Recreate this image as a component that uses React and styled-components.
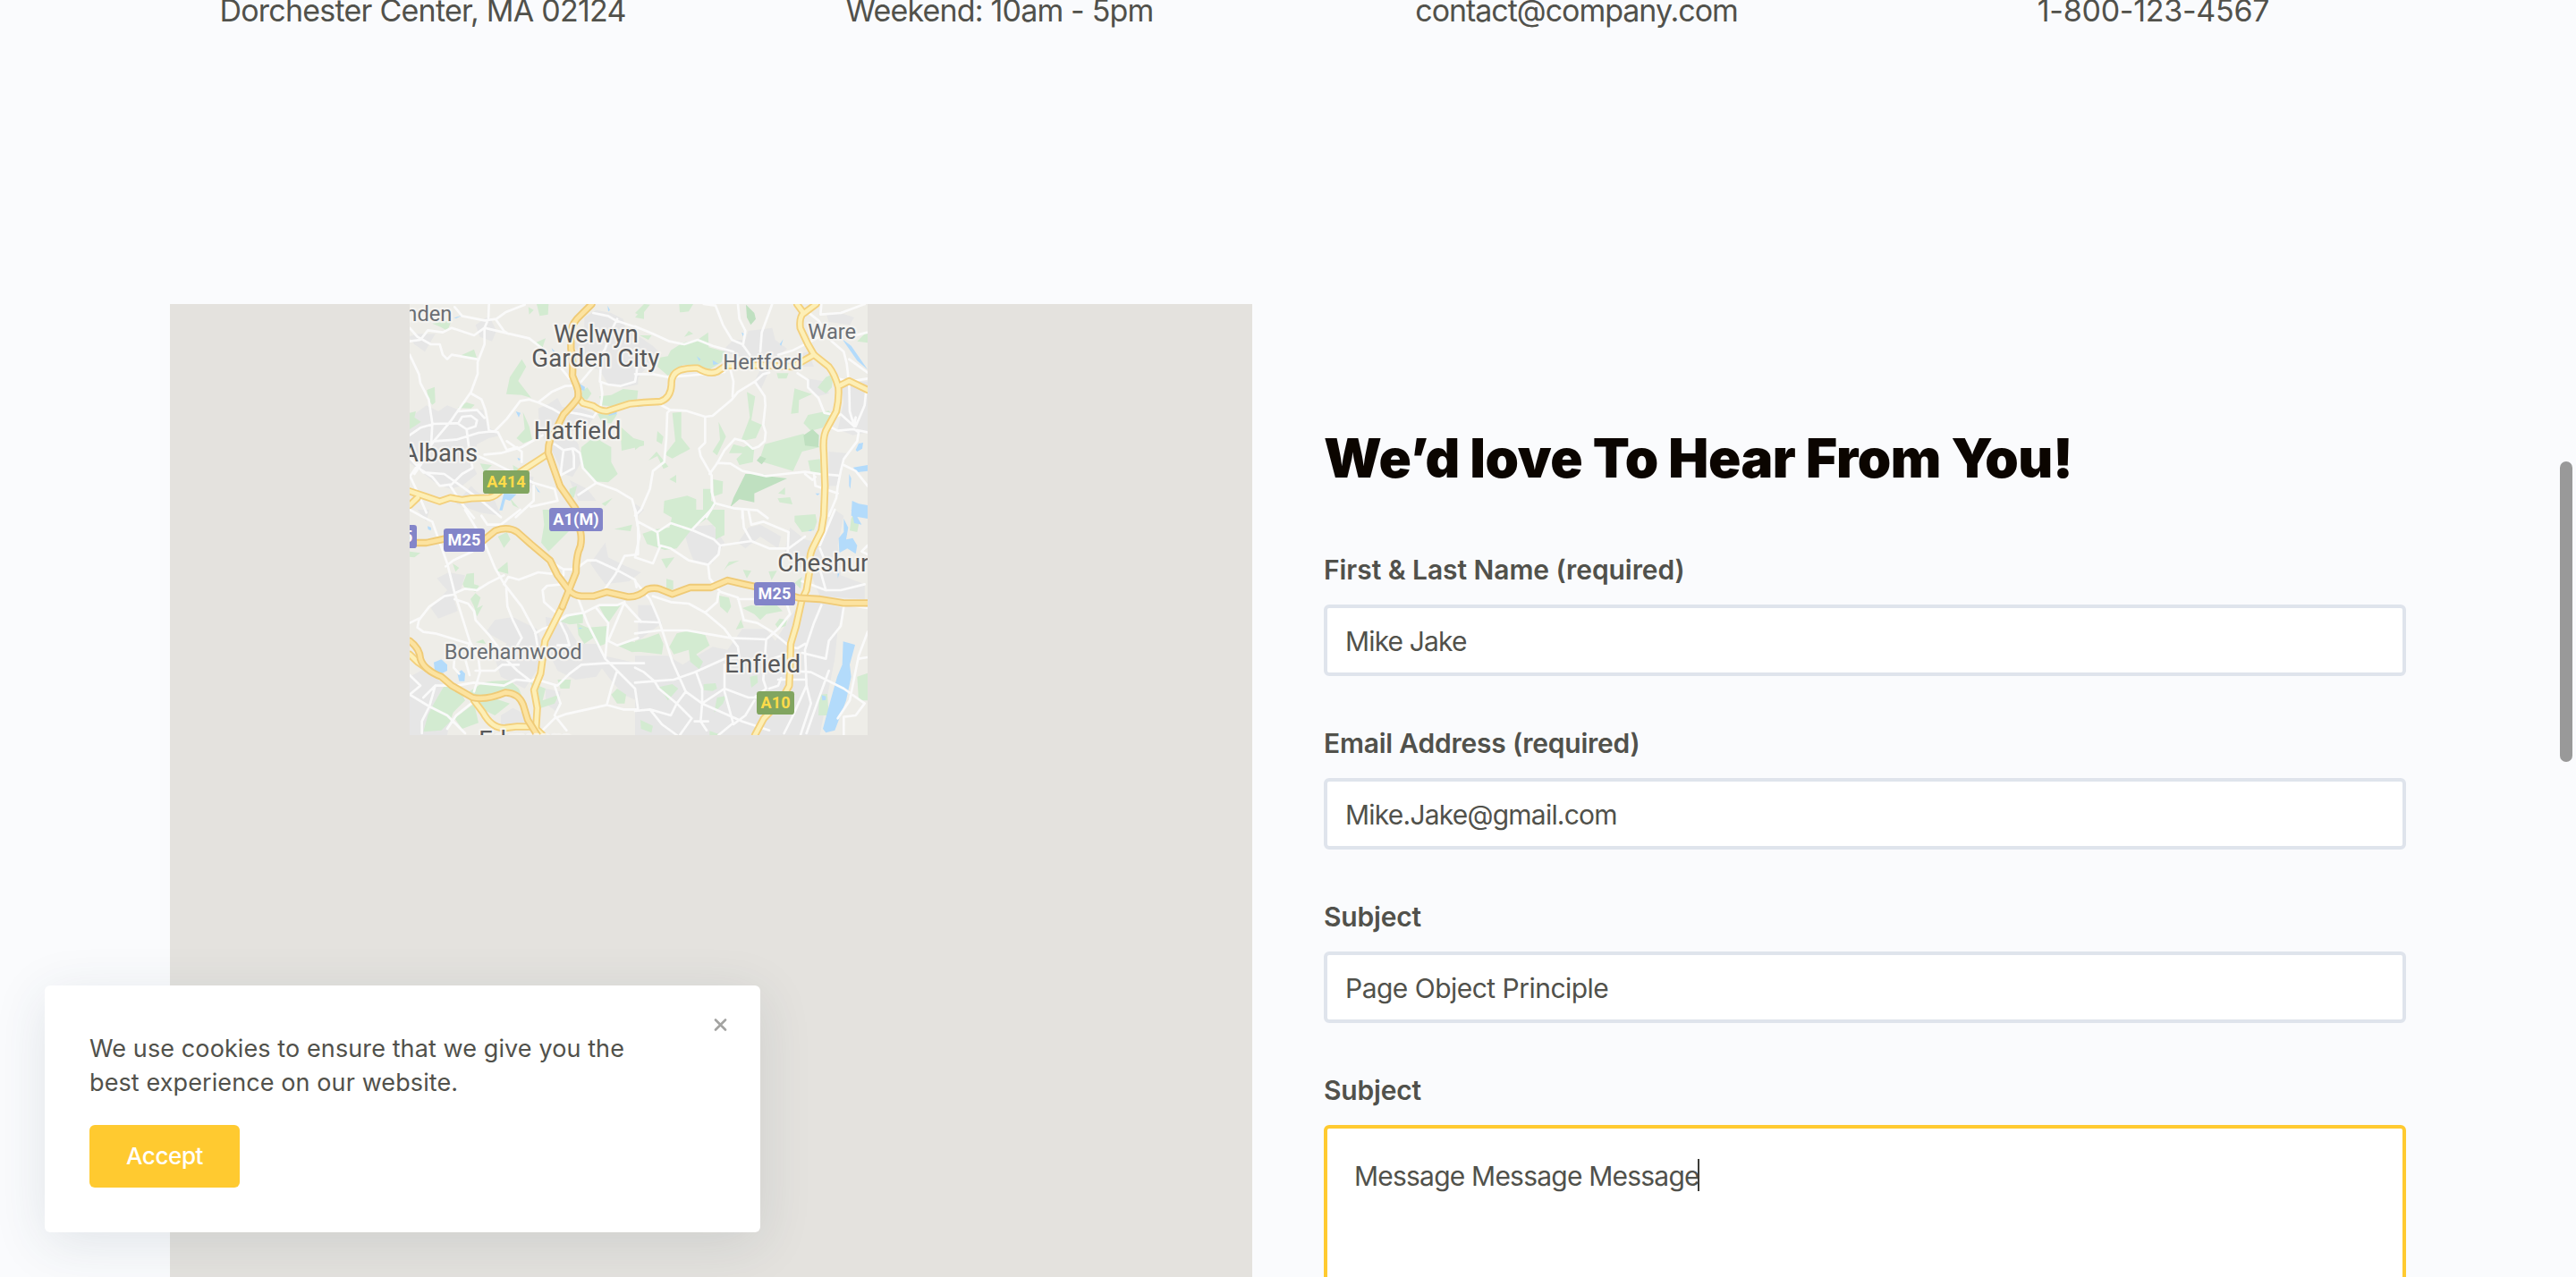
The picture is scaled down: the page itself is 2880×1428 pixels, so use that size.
import React from "react";
import styled, { createGlobalStyle, css } from "styled-components";

const GlobalStyle = createGlobalStyle`
  *, *::before, *::after { box-sizing: border-box; }
  html, body { margin: 0; height: 100%; overflow: hidden; background: #fafbfd; }
  body { font-family: Inter, "Liberation Sans", sans-serif; color: #51514b; }
`;

const Page = styled.div`
  position: relative;
  width: 100%;
  height: 100vh;
  overflow: hidden;
  background: #fafbfd;
`;

const ContactStrip = styled.section`
  display: grid;
  grid-template-columns: repeat(4, 645px);
  justify-content: center;
  height: 340px;
`;

const ContactLine = styled.p`
  margin: -12px 0 0;
  font-size: 34px;
  line-height: 48px;
  text-align: center;
  letter-spacing: ${(p) => p.$track || 0}px;
`;

const Columns = styled.main`
  display: grid;
  grid-template-columns: 1210px 1210px;
  column-gap: 80px;
  padding-left: 190px;
`;

const MapPanel = styled.div`
  height: 1160px;
  padding-left: 268px;
  background: #e4e2de;
`;

const MapTile = styled.svg`
  display: block;
  width: 512px;
  height: 482px;
`;

const Form = styled.form`
  padding-top: 134px;
`;

const Title = styled.h2`
  margin: 0 0 71px;
  font-size: 60px;
  line-height: 76px;
  font-weight: 900;
  letter-spacing: -0.42px;
  color: #0b0500;
  white-space: nowrap;
`;

const Field = styled.div`
  margin-bottom: 59px;
`;

const Caption = styled.span`
  display: block;
  height: 41px;
  margin-bottom: 14px;
  font-size: 30px;
  line-height: 32px;
  font-weight: 600;
  letter-spacing: ${(p) => p.$track || 0}px;
`;

const controlStyle = css`
  border: 4px solid ${(p) => (p.$active ? "#ffca30" : "#dfe4ec")};
  border-radius: 6px;
  background: #fff;
  font-size: 30px;
  letter-spacing: ${(p) => p.$track || 0}px;
`;

const Control = styled.div`
  ${controlStyle}
  display: flex;
  align-items: center;
  height: 80px;
  padding: 1px 20px 0;
`;

const MessageBox = styled.div`
  ${controlStyle}
  display: flex;
  align-items: flex-start;
  height: 300px;
  padding: 35px 30px;
  line-height: 36px;
`;

const Caret = styled.i`
  width: 2px;
  height: 36px;
  margin: -1px 0 0 -2px;
  background: #3c3c38;
`;

const CookieCard = styled.aside`
  position: absolute;
  left: 50px;
  bottom: 50px;
  width: 800px;
  height: 276px;
  padding: 52px 50px 50px;
  border-radius: 6px;
  background: #fff;
  box-shadow: 0 12px 60px rgba(44, 62, 80, 0.12);
`;

const CookieText = styled.p`
  width: 620px;
  margin: 0 0 28px;
  font-size: 27px;
  line-height: 38px;
  white-space: pre-line;
  letter-spacing: 0.1px;
`;

const AcceptButton = styled.button`
  width: 168px;
  height: 70px;
  padding: 0;
  border: 0;
  border-radius: 6px;
  background: #ffca30;
  color: #fff;
  font: 500 26px/70px Inter, sans-serif;
  letter-spacing: -0.4px;
`;

const CloseIcon = styled.svg`
  position: absolute;
  top: 37px;
  right: 37px;
  width: 15px;
  height: 14px;
`;

const ScrollThumb = styled.div`
  position: absolute;
  top: 516px;
  right: 4px;
  width: 14px;
  height: 336px;
  border-radius: 7px;
  background: #999;
`;

/* Map artwork: each group is [x offset, y offset, path data]. */
const urban = [
  [0, 0, "M0 460L40 400L80 370L120 390L150 370L200 390L270 385L285 440L330 470L290 480L250 500L230 560L250 600L200 640L160 650L110 630L60 590L20 560ZM20 140L50 130L110 130L75 190L40 165ZM245 100L290 70L315 120L300 155L260 140ZM455 380L490 365L520 345L535 375L570 380L600 380L650 400L620 440L560 460L590 500L600 560L570 610L540 600L500 520L460 460ZM610 75L650 50L700 60L740 80L750 120L790 130L790 300L740 310L690 300L660 250L620 240L600 190L560 170L610 120ZM560 620L620 650L650 690L590 690ZM250 660L310 690L330 740L260 730L180 700L230 640ZM380 600L440 610L430 650L410 640Z"],
  [780, 0, "M0 130L60 170L90 200L40 240L0 290ZM290 190L330 150L370 150L380 120L460 110L470 150L510 180L470 210L420 320L400 290L420 250L370 210ZM640 60L690 60L735 75L720 100L650 90ZM540 200L580 190L600 240L560 240ZM580 280L640 290L650 330L610 340L580 310ZM690 300L720 290L780 290L780 460L730 470L680 450L700 360ZM650 525L710 530L680 640L650 640ZM0 700L30 720L0 750Z"],
  [0, 720, "M115 230L155 210L210 220L195 270L170 290L185 340L120 365L95 330L150 270ZM370 360L450 400L470 450L450 540L410 600L330 560L310 500L350 450L280 410L310 370ZM480 360L540 370L590 450L650 450L690 500L650 560L580 570L520 540L490 480ZM630 180L680 110L690 160L750 190L800 210L760 240L680 250L650 210ZM330 690L370 665L400 680L420 740L330 740ZM24 560L80 530L140 590L100 660L160 700L150 756L24 756ZM50 0L90 0L80 40ZM630 480L810 520L810 650L740 620L690 560ZM480 600L530 610L520 680L480 650Z"],
  [780, 720, "M0 490L110 490L160 520L190 500L260 460L310 470L360 400L440 400L470 440L560 300L620 310L700 330L680 400L670 500L640 650L620 756L0 756ZM160 60L260 50L300 110L260 180L200 180L180 130ZM520 60L570 100L620 110L670 0L700 20L680 120L690 220L770 250L770 300L620 290L590 220L500 150L510 100ZM380 60L420 50L490 90L480 130L420 90L370 130L345 110ZM10 320L60 320L90 380L10 440Z"],
];
const green = [
  [0, 0, "M400 215L415 240L388 288L432 345L400 335L348 332L360 275ZM190 205L240 182L250 213ZM82 318L108 308L110 360L100 368L85 350ZM185 378L215 360L242 368L230 380ZM24 395L45 390L40 410L62 425L40 440L24 450ZM404 392L425 440L435 485L405 497L382 480L410 450ZM602 320L620 310L634 330L620 350L600 348ZM660 340L700 335L740 315L790 320L785 365L720 375L670 370ZM655 400L690 385L720 400L700 430L670 430ZM730 440L775 480L810 490L810 505L735 522ZM600 510L650 470L665 490L700 510L700 560L722 600L690 628L640 625L605 585L595 550ZM422 40L440 50L425 65ZM450 30L490 30L488 65L460 70ZM100 95L165 85L150 120L130 108ZM446 160L480 145L470 175ZM780 75L810 40L810 80ZM260 565L300 570L275 595ZM370 570L404 590L375 600ZM560 650L585 640L575 680L560 675ZM668 700L705 680L680 708ZM360 680L390 715L370 705Z"],
  [780, 0, "M0 60L30 30L50 32L20 70ZM148 30L195 30L180 55L150 58ZM80 210L110 205L120 185L160 160L210 150L245 125L247 175L300 190L290 225L250 250L200 235L160 235L110 270L75 240ZM15 135L55 135L45 150ZM165 140L180 120L195 130ZM375 325L403 340L390 420L425 435L405 480L355 490L385 410ZM535 313L593 332L550 352L548 395L523 398ZM612 310L640 275L665 265L660 310L640 330ZM565 430L580 402L650 388L660 400L630 445L590 455ZM125 395L155 392L155 478L185 516L125 548L100 535L135 490ZM75 456L95 475L90 500L72 490ZM45 555L72 525L112 575L95 583L75 540ZM280 425L305 475L275 538L260 525L285 485ZM435 500L565 465L620 510L560 525L530 590L430 560L420 545ZM315 530L330 500L365 510L385 500L400 515L395 560L350 570L340 550L360 530ZM580 555L620 550L625 600L590 600ZM475 262L515 262L508 280L480 280ZM115 618L138 603V630ZM262 618L295 625L293 665L265 675ZM228 650L255 650L255 690L275 700L240 740L228 735ZM98 690L175 673L205 685L205 740L130 750L95 730ZM480 665L503 645L503 670ZM478 682L520 678L528 702L485 695ZM745 155L780 120V160ZM0 505L28 498L0 520Z"],
  [0, 720, "M470 0L570 0L570 60L540 90L490 140L465 110L475 50ZM320 90L350 75L362 100L340 128ZM24 140L60 145L40 160L24 158ZM168 180L190 195L178 208ZM315 205L352 175L355 215ZM202 250L215 215L240 212L240 250L257 255L245 275L210 265ZM228 300L245 280L262 295L250 330L270 320L250 358L240 325ZM530 375L570 350L605 350L605 380L560 385ZM585 380L620 395L690 390L680 450L655 460L640 430L610 450L590 420ZM245 445L270 435L280 450ZM660 325L735 315L690 380ZM720 455L760 440L810 450V475L770 478ZM710 65L770 50L765 72ZM700 620L720 600L750 620L745 650L720 650ZM430 580L480 600L470 640L525 620L510 650L450 670L440 620ZM520 570L565 570L560 600L530 600ZM270 580L300 575L360 572L390 600L400 625L340 615L300 630L360 650L310 690L260 665L245 630L225 610ZM105 650L140 590L190 600L210 640L170 680L160 710L130 740L70 745L85 690ZM175 700L240 650L255 715L200 735Z"],
  [780, 720, "M25 80L70 65L115 60L130 0L300 0L300 85L270 100L270 60L240 30L190 65L140 130L100 135L40 115ZM88 165L132 160L105 197ZM105 232L128 238L128 268H105ZM297 205L315 175L350 170L310 190ZM362 202L390 205L375 230ZM448 207L476 205L458 236ZM535 20L605 15L610 40L600 70L560 75L535 40ZM740 0L750 50L745 75L720 70L725 30ZM282 288L315 295L322 325L310 347L285 325ZM360 330L390 320L420 325L470 315L495 340L440 350L420 370L400 350ZM355 368L365 395L338 402ZM470 385L485 365L510 370L505 390L480 398ZM0 440L40 430L80 415L95 450L90 485L0 475ZM115 460L140 415L180 405L235 420L250 455L205 485L228 510L215 535L185 510L180 470L130 485ZM230 585L270 582L275 600L260 608L230 605ZM80 595L125 585L145 600L110 640ZM275 630L305 625L295 650L265 680ZM385 560L410 555L412 580L390 597ZM745 560L780 548V640L750 640ZM618 620L645 618L650 690L615 690ZM18 705L60 725L55 748L20 735ZM250 742L290 756H250ZM535 245L560 225L555 265Z"],
];
const darkGreen = [
  [780, 0, "M372 32L400 60L405 80L388 100L375 75ZM565 470L595 450L617 470L615 510L570 505ZM408 555L420 540L440 548L425 568ZM330 680L345 650L370 600L430 600L455 608L510 615L400 665L400 695L350 685L320 710Z"],
];
const water = [
  [0, 0, "M590 295L612 308L610 320L595 318ZM380 390L396 395L390 410ZM385 545L396 550L390 556ZM340 665L382 668L360 690L345 685L335 722L325 722ZM443 638L462 662L455 660ZM500 178L512 190L505 192ZM172 76L200 68L180 78ZM688 35L696 50L690 55ZM690 395L720 388L718 398L692 405Z"],
  [780, 0, "M207 205L220 215L215 222ZM260 218L280 230L262 234ZM485 165L497 148L490 170ZM695 148L725 170L780 250L745 220ZM740 520L750 498L765 495L762 515L745 525ZM732 578L780 570V590L740 595ZM728 690L750 700L780 705V750L725 740ZM718 600L725 615L722 650L718 640ZM605 665H620L612 672ZM0 370L30 372L10 376ZM357 125L367 130L362 138Z"],
  [0, 720, "M105 512L130 502L150 520L150 540L125 553L108 540ZM184 548L198 538L210 550L208 575H190ZM84 55L96 60L95 70L86 66ZM590 396H605L595 400Z"],
  [780, 720, "M725 0L770 0L740 15L760 50L735 45ZM700 30L715 60L708 100L730 95L745 120L740 148L712 130L685 145L683 95L700 75ZM698 442L738 453L720 520L725 560L708 640L670 740L640 748L630 735L650 660L678 560L695 520ZM626 622L640 626V638L628 640ZM580 70L595 65L590 72ZM678 200L685 215L680 230Z"],
];
const roads = [
  [0, 0, "M290 30L288 80L275 110L275 165L252 225L252 265L230 325L160 425L105 490L24 610M175 40L200 70L275 85L315 80L345 58L410 32M24 155L60 150L85 118L135 125L165 110L240 135L275 110L360 130L425 145L470 180M24 110L50 140L95 165L125 165L135 200L150 215L165 200L250 215M24 200L55 265L60 295L88 350L100 430L95 520L40 600M230 330L265 350L278 385L285 420L290 455L320 460L350 520L385 510M24 470L60 445L105 432L185 430L215 450L245 440L250 420L230 405L200 408L190 425M185 390L250 385L275 412M105 490L180 485L255 462L310 456L350 415L395 355L425 350L455 360L500 325L545 305L590 303M275 535L330 530L400 510L470 470M350 490L400 525L400 560M455 360L500 380L535 400M215 450L225 530L235 580L200 600L165 635L125 640L100 610L60 585M24 545L70 595L140 600L210 650L265 690L330 745M230 530L300 560L370 595L440 630L510 650L520 690L430 710M315 85L340 120L355 130M540 390L600 400L640 410L665 370L668 350M665 240L662 290L690 300L730 305L780 290L785 260L790 210M665 295L670 330L668 350M520 230L560 280M600 290L650 230L680 180L700 120L720 80M640 60L690 70L715 85L790 110M510 500L540 520L535 560L530 605L575 580L575 540L570 515L540 520M575 515L595 530L605 580L650 630L720 655L770 685L785 740M650 630L590 670M160 640L200 700L240 748M24 605L50 660L80 730M380 745L440 690L440 640"],
  [780, 0, "M230 30L270 35L295 100L325 150L360 165L385 200M345 30L350 80L370 120L362 170M460 30L425 125L420 190M0 105L60 130L115 155L165 165L210 150L260 170L330 190M0 265L60 265L110 275L180 270L300 258M320 250L330 290L327 340M70 360L118 385L170 388L235 408L260 405L325 350L345 325L402 290L430 265L450 260M402 290L435 340L437 370L430 435L438 460L435 490L415 508L395 515L365 490L335 482L300 520L275 565L250 600M235 408V495L215 515L220 540L257 605L257 660L268 698L240 745M118 385L108 395L105 480L98 560L60 590L50 650L20 720L0 740M275 563L320 565L360 590L440 607L500 600L570 593L620 600L680 605M268 698L330 715L410 722L445 748M480 200L530 185L590 155L625 135M570 50L615 85L660 155L700 190L710 230L718 300L720 390L735 440L690 400L680 405M625 30L622 65L690 60L770 30M650 440L680 455L730 450L780 460M735 440L740 410L735 425M735 450L750 460L745 490L700 550L690 590L680 640L675 680L650 740M700 570L740 590L780 640M600 600L605 640L680 665M570 600L595 620L605 610M545 262L580 285L580 310L615 345L635 395L660 400M718 215L780 260M680 280L720 290L780 280M775 320L770 370L740 440M780 125L720 140M360 720V748"],
  [0, 720, "M24 0L70 25L100 40L150 180L175 280L225 440L255 500L260 545L240 610M210 0L275 110L310 195L342 250L400 325L445 410L455 470M265 20L285 50L330 50L395 0M330 50L300 80M145 190L170 170L235 140M175 280L210 265L250 270L290 245L340 220M170 285L140 290L90 325L55 370L50 395L70 410L110 415L225 450M24 380L55 365M175 300L220 315L240 340L245 370L290 420L320 460L345 500L385 540L430 575M340 250L355 225L390 235L430 220L455 210L500 215M348 265L352 325L370 370L400 430L385 455M445 415L470 400L500 390L550 355L610 345L660 320L720 320L745 310M535 250L485 255L470 270L475 310L520 350M530 380L550 420L560 455L520 455M450 570L520 590L560 550L600 520L680 515L810 515M590 300L620 380L680 500L720 540L780 600L790 670L740 670L685 655L550 685L510 700L470 740M680 500L685 440L690 380L650 330M680 265L715 215L745 155L790 150L790 60L780 0M540 200L580 200L620 170L650 170L715 200L780 235L785 260M745 310L720 370L690 440L720 455L790 430M745 315L800 375M24 555L60 590L24 620L90 660L150 690L210 750M240 580L180 590L110 590L70 630M240 580L340 590L380 570L430 575L450 565M245 540L310 540L335 520L390 520M230 650L180 690L150 735M110 590L90 660L65 710L65 750M510 590L530 650L510 690L550 740M720 540L700 600L685 655M175 480L172 530L190 550M225 450L210 500L225 555M490 170L540 200L540 220"],
  [780, 720, "M0 0L15 90L0 160L60 180L85 120L120 130L180 170L245 185L280 150L285 120L265 100L195 70L120 45L75 75L80 120M10 40L75 75M190 68L255 0M360 0L365 60L390 105L450 130L515 130L570 90M380 0L390 50L430 40L515 75L512 140M285 120L390 105M0 240L50 300L80 370L125 510L170 610L225 650L360 710L450 740M60 290L120 310L180 315L235 345L300 400L345 460L350 500M245 185L250 230L285 275L345 295L365 370L410 380L460 410L515 455M235 345L275 310L280 280M0 375L80 378M0 415L80 405L175 405L320 430L440 435L480 400L520 350L510 320M440 435L435 500L430 570L440 600L400 630M345 300L400 300M0 530L30 545L65 575L130 570L200 545L300 500L350 495M0 580L65 575L80 600L140 650L190 700M170 610L140 650L120 690L50 670L0 675M205 545L225 600L225 650L220 710L240 740M200 710L245 710M225 650L300 600L380 630L410 630M300 520L300 610L330 720L370 690L400 640M330 715L280 756M50 670L90 720L140 756M190 700L150 756M570 450L545 465L520 460M625 320L600 380L570 470L575 590L530 690L500 750M700 325L690 390L650 440L640 500L560 480M575 590L590 650L555 756M650 540L610 650L575 750M520 540L590 545L640 570L700 600L770 650M780 410L750 490L740 540L720 640L680 700M770 650L740 690L700 695L700 756M620 130L640 180L620 200L640 270L690 270L770 250M560 240L640 270M620 120L670 0M575 300L660 310L780 330M480 570H575M450 600L480 590L490 565M780 495L750 500M780 120L760 140L780 150M460 500L520 480"],
];
const expressways = [
  "M635 30L585 80Q564 105 565 130V180Q573 215 570 270L584 305Q592 325 588 345Q575 365 540 400L515 450Q487 485 489 530L528 640L580 715L598 800Q603 835 590 860Q582 890 582 930L558 990L536 1045",
  "M24 831H80L140 818L270 824L312 790Q355 775 385 795L430 835L495 890L520 940L558 990Q575 1008 600 1010H640L685 996L755 1012Q790 1015 820 987Q845 980 862 986L905 1003L965 981H1035L1090 957L1150 971L1240 990L1330 1016L1400 1020L1480 1033H1560",
  "M24 1160Q58 1185 60 1220Q72 1258 130 1280L165 1310L235 1350Q280 1360 345 1333Q390 1335 405 1375L420 1425L452 1476",
];
const trunks = [
  "M536 1045L478 1160L463 1270L441 1325L452 1385L448 1450",
  "M24 1205L50 1230L95 1262M240 1360L270 1400Q300 1455 345 1452L385 1447L440 1448L470 1476",
  "M24 658L75 675L125 692L160 680L200 687L230 682L290 680Q315 675 330 655L400 590L485 535M24 705L50 680",
  "M590 345L605 362L640 372Q665 392 690 388L760 365L810 360L865 357Q900 345 902 300Q900 265 930 252Q955 243 990 245Q1028 268 1055 257L1085 237L1200 235L1310 240L1380 200",
  "M1323 30L1345 60Q1330 75 1334 110L1360 165L1380 200L1430 240Q1450 265 1462 310Q1465 345 1455 390L1425 445Q1408 470 1413 530L1417 640L1413 740L1405 790L1375 850Q1363 875 1368 910L1355 990L1340 1020L1320 1110L1302 1170L1300 1240L1297 1310L1270 1360L1212 1420L1182 1476M1388 30L1345 62M1470 302L1498 288L1560 318",
];
const cities = [
  ["Harpenden", 166, 88, 71, "end", "#6a6e73", 0],
  ["Welwyn", 507, 158, 83, "start", "#58595a", 0],
  ["Garden City", 433, 241, 83, "start", "#58595a", 0.2],
  ["Hatfield", 440, 482, 83, "start", "#58595a", 0.2],
  ["St Albans", 252, 557, 82, "end", "#58595a", 0],
  ["Hertford", 1075, 250, 71, "start", "#6a6e73", 0],
  ["Ware", 1360, 146, 71, "start", "#6a6e73", 0],
  ["Cheshunt", 1258, 928, 83, "start", "#58595a", 0],
  ["Enfield", 1081, 1266, 83, "start", "#58595a", 0.2],
  ["Borehamwood", 140, 1222, 71, "start", "#6a6e73", 0.2],
  ["Edgware", 256, 1521, 82, "start", "#58595a", 0],
];
const shields = [
  ["A414", 270, 588, 156, true],
  ["A1(M)", 492, 714, 180, false],
  ["M25", 138, 783, 138, false],
  ["M25", -90, 771, 138, false],
  ["M25", 1179, 963, 138, false],
  ["A10", 1188, 1329, 126, true],
];

const Layer = ({ parts, ...rest }) => (
  <g {...rest}>
    {parts.map(([x, y, d], i) => (
      <path key={i} d={d} transform={`translate(${x} ${y})`} />
    ))}
  </g>
);

const Highways = ({ paths, edge, core }) => (
  <g fill="none" strokeLinejoin="round" strokeLinecap="round">
    {paths.map((d) => <path key={d} d={d} stroke={edge} strokeWidth="25" />)}
    {paths.map((d) => <path key={d} d={d} stroke={core} strokeWidth="14" />)}
  </g>
);

function RoadMap() {
  return (
    <MapTile viewBox="24 30 1536 1446" fontFamily="Roboto, sans-serif">
      <rect x="24" y="30" width="1536" height="1446" fill="#eeede8" />
      <Layer parts={urban} fill="#e6e6e6" />
      <Layer parts={green} fill="#d3ebd1" />
      <Layer parts={darkGreen} fill="#bfe0c0" />
      <Layer parts={water} fill="#b3dbfb" />
      <Layer parts={roads} fill="none" stroke="#fafafa" strokeWidth="8" strokeLinejoin="round" strokeLinecap="round" />
      <Highways paths={trunks} edge="#f3d07c" core="#fdefb6" />
      <Highways paths={expressways} edge="#efca76" core="#fce3a0" />
      {cities.map(([name, x, y, size, anchor, fill, track]) => (
        <text key={name} x={x} y={y} fontSize={size} textAnchor={anchor} fill={fill} letterSpacing={track}
          stroke="#f6f5f2" strokeOpacity="0.85" strokeWidth="14" strokeLinejoin="round" paintOrder="stroke">
          {name}
        </text>
      ))}
      {shields.map(([name, x, y, w, primary]) => (
        <g key={`${name}${x}`}>
          <rect x={x} y={y} width={w} height="78" rx="10" fill={primary ? "#81a560" : "#8385c9"} />
          <text x={x + w / 2} y={y + 58} fontSize="54" fontWeight="700" textAnchor="middle" letterSpacing="0.5"
            fill={primary ? "#fddb4a" : "#fff"}>
            {name}
          </text>
        </g>
      ))}
    </MapTile>
  );
}

const contacts = [
  { text: "Dorchester Center, MA 02124", track: -0.76 },
  { text: "Weekend: 10am - 5pm", track: -0.82 },
  { text: "contact@company.com", track: -1.03 },
  { text: "1-800-123-4567", track: -0.27 },
];

const fields = [
  { caption: "First & Last Name (required)", captionTrack: -0.06, value: "Mike Jake", track: -0.85 },
  { caption: "Email Address (required)", captionTrack: -0.22, value: "Mike.Jake@gmail.com", track: -0.78 },
  { caption: "Subject", captionTrack: -0.2, value: "Page Object Principle", track: -0.52 },
];

export default function App() {
  return (
    <Page>
      <GlobalStyle />
      <ContactStrip>
        {contacts.map((c) => <ContactLine key={c.text} $track={c.track}>{c.text}</ContactLine>)}
      </ContactStrip>
      <Columns>
        <MapPanel><RoadMap /></MapPanel>
        <Form>
          <Title>We’d love To Hear From You!</Title>
          {fields.map((f) => (
            <Field key={f.caption}>
              <Caption $track={f.captionTrack}>{f.caption}</Caption>
              <Control $track={f.track}>{f.value}</Control>
            </Field>
          ))}
          <Field>
            <Caption $track={-0.2}>Subject</Caption>
            <MessageBox $active $track={-0.79}>Message Message Message<Caret /></MessageBox>
          </Field>
        </Form>
      </Columns>
      <CookieCard>
        <CookieText>{"We use cookies to ensure that we give you the\nbest experience on our website."}</CookieText>
        <AcceptButton type="button">Accept</AcceptButton>
        <CloseIcon viewBox="0 0 15 14"><path d="M2 1.5L13 12.5M13 1.5L2 12.5" stroke="#a3a3a1" strokeWidth="2.6" strokeLinecap="round" /></CloseIcon>
      </CookieCard>
      <ScrollThumb />
    </Page>
  );
}
